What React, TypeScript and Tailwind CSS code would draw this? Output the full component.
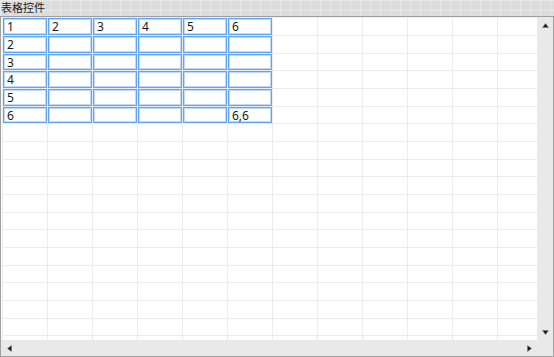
import React from "react";

const COLS = 12;
const ROW_H = [18, 18, 17, 18, 18, 17, 18, 18, 17, 18, 18, 17, 18, 18, 17, 18, 18, 17, 18];

const cellText = (r: number, c: number) => {
  if (r === 0) return String(c + 1);
  if (c === 0) return String(r + 1);
  if (r === 5 && c === 5) return "6,6";
  return "";
};

function Arrow({ dir }: { dir: "up" | "down" | "left" | "right" }) {
  const pts = {
    up: "0.5,4.5 3.5,0.5 6.5,4.5",
    down: "0.5,0.5 3.5,4.5 6.5,0.5",
    left: "4.5,0.5 0.5,3.5 4.5,6.5",
    right: "0.5,0.5 4.5,3.5 0.5,6.5",
  }[dir];
  const vertical = dir === "up" || dir === "down";
  return (
    <svg width={vertical ? 7 : 5} height={vertical ? 5 : 7} viewBox={vertical ? "0 0 7 5" : "0 0 5 7"}>
      <polygon points={pts} fill="#1a1a1a" stroke="#777" strokeWidth="0.5" />
    </svg>
  );
}

export default function App() {
  return (
    <div
      className="w-[554px] h-[357px] overflow-hidden flex flex-col bg-[#dcdcdc] bg-[linear-gradient(to_right,#e9e9e9_1px,transparent_1px),linear-gradient(to_bottom,#e9e9e9_1px,transparent_1px)] bg-[size:10px_10px]"
      style={{ fontFamily: '"Noto Sans", "Noto Sans CJK SC", sans-serif' }}
    >
      {/* designer caption */}
      <div className="h-[16px] pl-[1px] text-[11px] leading-[15px] text-[#1a1a1a]" style={{ fontFamily: '"Noto Sans CJK SC", sans-serif' }}>
        表格控件
      </div>

      {/* grid control */}
      <div className="w-[554px] h-[341px] border border-[#a0a0a0] bg-white flex flex-col">
        <div className="flex h-[323px]">
          <div className="w-[536px] overflow-hidden pl-[1px]">
            <div className="border-l border-t border-[#ececec] w-max">
              {ROW_H.map((h, r) => (
                <div key={r} className="flex" style={{ height: h }}>
                  {Array.from({ length: COLS }).map((_, c) => (
                    <div key={c} className="w-[45px] h-full border-r border-b border-[#ececec] shrink-0">
                      {r < 6 && c < 6 && (
                        <div className="h-full border border-[#5fa5f2] shadow-[inset_0_0_0_1px_#bcdaf9] bg-white pl-[3px] text-[12px] leading-[15px] text-[#1a1a1a]">
                          {cellText(r, c)}
                        </div>
                      )}
                    </div>
                  ))}
                </div>
              ))}
            </div>
          </div>
          {/* vertical scrollbar */}
          <div className="w-[16px] bg-[#e9e9e9] flex flex-col justify-between">
            <div className="h-[16px] flex items-center justify-center">
              <Arrow dir="up" />
            </div>
            <div className="h-[16px] flex items-center justify-center">
              <Arrow dir="down" />
            </div>
          </div>
        </div>
        {/* horizontal scrollbar */}
        <div className="flex h-[16px]">
          <div className="w-[536px] bg-[#e9e9e9] flex items-center justify-between">
            <div className="w-[16px] h-full flex items-center justify-center">
              <Arrow dir="left" />
            </div>
            <div className="w-[16px] h-full flex items-center justify-center">
              <Arrow dir="right" />
            </div>
          </div>
          <div className="w-[16px] bg-[#e9e9e9]" />
        </div>
      </div>
    </div>
  );
}
